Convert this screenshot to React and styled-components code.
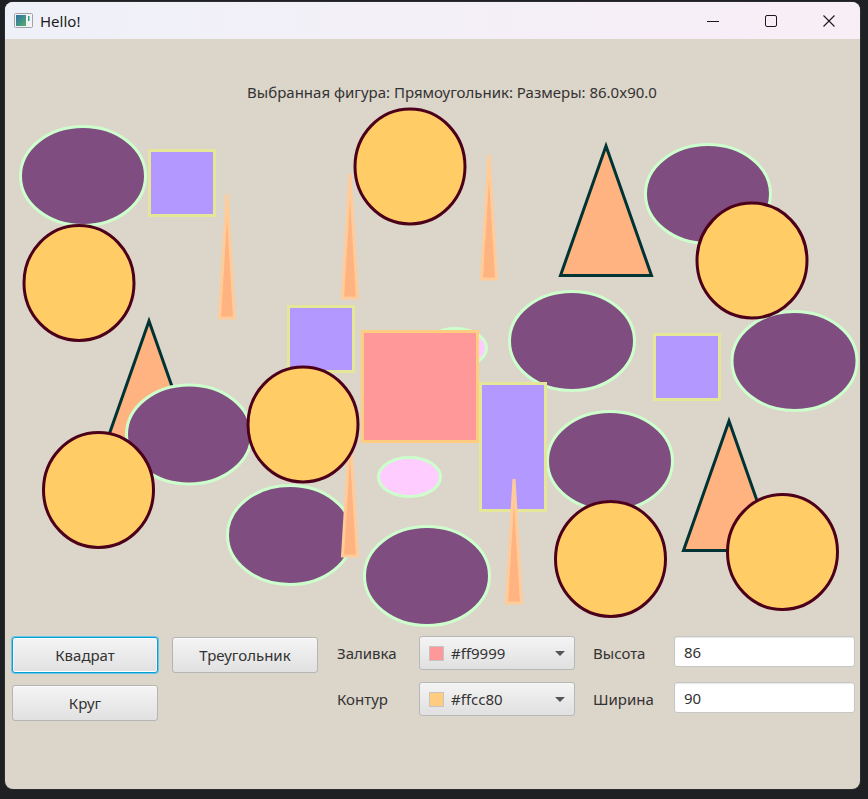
import styled, { createGlobalStyle } from "styled-components";

const GlobalStyle = createGlobalStyle`
  body {
    margin: 0;
    background: #1f2023;
    font-family: "Segoe UI", "Noto Sans", sans-serif;
  }
`;

const Page = styled.div`
  padding: 2px 0 0 5px;
  height: 799px;
  box-sizing: border-box;
`;

const Window = styled.div`
  width: 855px;
  height: 787px;
  border-radius: 8px;
  overflow: hidden;
  display: flex;
  flex-direction: column;
  background: #dcd5ca;
  box-shadow: 0 0 0 1px #2c2d30;
`;

const TitleBar = styled.div`
  height: 37px;
  flex: none;
  display: flex;
  align-items: center;
  background: linear-gradient(90deg, #eff1f8, #f8eef6);
`;

const AppIcon = styled.svg`
  margin-left: 9px;
  flex: none;
`;

const Title = styled.div`
  margin-left: 7px;
  font-size: 15px;
  color: #1b1b1b;
`;

const Captions = styled.div`
  margin-left: auto;
  margin-right: 2px;
  display: flex;
`;

const CaptionButton = styled.div`
  width: 58px;
  height: 37px;
  display: flex;
  align-items: center;
  justify-content: center;
`;

const Content = styled.div`
  flex: 1;
  display: flex;
  flex-direction: column;
`;

const Header = styled.div`
  margin-top: 44px;
  height: 18px;
  line-height: 18px;
  padding-left: 39px;
  text-align: center;
  font-size: 15px;
  color: #333;
`;

const Canvas = styled.svg`
  display: block;
  flex: none;
  overflow: visible;
`;

const Oval = styled.ellipse`
  fill: #7f4d7f;
  stroke: #ccffcc;
  stroke-width: 3;
`;

const Blob = styled.ellipse`
  fill: #ffccff;
  stroke: #ccffcc;
  stroke-width: 3;
`;

const Circle = styled.ellipse`
  fill: #ffcc66;
  stroke: #4d0019;
  stroke-width: 3;
`;

const Box = styled.rect`
  fill: ${(p) => (p.$pink ? "#ff9999" : "#b399ff")};
  stroke: ${(p) => (p.$pink ? "#ffcc80" : "#e6e699")};
  stroke-width: 3;
`;

const Spike = styled.polygon`
  fill: #ffb380;
  stroke: #ffcc99;
  stroke-width: 3;
`;

const Peak = styled.polygon`
  fill: #ffb380;
  stroke: #003333;
  stroke-width: 3;
`;

const Controls = styled.div`
  display: flex;
  padding: 6px 0 0 7px;
`;

const ButtonGrid = styled.div`
  display: grid;
  grid-template-columns: 146px 146px;
  column-gap: 14px;
  row-gap: 12px;
  margin-top: 1px;
  align-content: start;
`;

const Button = styled.button`
  height: 36px;
  box-sizing: border-box;
  border: 1px solid ${(p) => (p.$focused ? "#039ed3" : "#b4b4b4")};
  border-radius: 3px;
  background: linear-gradient(#f4f4f4, #e1e1e1);
  box-shadow: ${(p) =>
    p.$focused ? "0 0 0 1px #6cc6e8, inset 0 0 0 1px #ffffff" : "inset 0 1px 0 #fbfbfb"};
  font-family: "Segoe UI", "Noto Sans", sans-serif;
  font-size: 15px;
  color: #333;
  padding: 0;
`;

const FormGrid = styled.div`
  margin-left: 19px;
  display: grid;
  grid-template-columns: 82px 156px 99px 181px;
  grid-auto-rows: 34px;
  row-gap: 12px;
  align-items: center;
`;

const FieldLabel = styled.div`
  font-size: 15px;
  color: #333;
  padding-left: ${(p) => (p.$indent ? "18px" : "0")};
`;

const ColorCombo = styled.div`
  height: 34px;
  box-sizing: border-box;
  display: flex;
  align-items: center;
  gap: 7px;
  padding: 0 9px;
  border: 1px solid #b8b8b8;
  border-radius: 3px;
  background: linear-gradient(#f4f4f4, #e0e0e0);
  font-size: 15px;
  color: #333;
`;

const Swatch = styled.span`
  width: 15px;
  height: 15px;
  box-sizing: border-box;
  border: 1px solid #c9c2c2;
  background: ${(p) => p.$color};
`;

const Arrow = styled.span`
  margin-left: auto;
  width: 0;
  height: 0;
  border-left: 5px solid transparent;
  border-right: 5px solid transparent;
  border-top: 5px solid #555;
`;

const TextField = styled.input`
  align-self: start;
  height: 31px;
  box-sizing: border-box;
  width: 181px;
  border: 1px solid #c6c6c6;
  border-radius: 3px;
  background: #fff;
  box-shadow: inset 0 1px 1px #e8e8e8;
  padding: 0 9px;
  font-family: "Segoe UI", "Noto Sans", sans-serif;
  font-size: 15px;
  color: #333;
  outline: none;
`;

const ovals = [
  [83, 176], [708, 194], [572, 341], [794.5, 361],
  [189, 434.5], [610, 461], [290, 535], [427, 576],
];
const circles = [
  [410, 166.5], [752, 260.5], [79, 283], [303, 424.5],
  [98.5, 490], [610.5, 559], [782.5, 552],
];
const boxes = [
  [148, 149, 68, 68], [287, 305, 68, 68], [653, 333, 68, 68], [479, 382, 68, 130],
];
const spikes = [[227, 192], [350, 172], [489, 153], [350, 430], [514, 477]];
const peaks = [[606, 146], [149, 321], [729, 421]];

const spikePoints = ([x, y]) =>
  `${x},${y + 2} ${x - 7.5},${y + 126} ${x + 7.5},${y + 126}`;
const peakPoints = ([x, y]) =>
  `${x},${y} ${x - 45.5},${y + 129.5} ${x + 45.5},${y + 129.5}`;

export default function App() {
  return (
    <>
      <GlobalStyle />
      <Page>
        <Window>
          <TitleBar>
            <AppIcon width="19" height="15" viewBox="0 0 19 15">
              <defs>
                <linearGradient id="ic" x1="0" y1="0" x2="1" y2="1">
                  <stop offset="0" stopColor="#2f6fa8" />
                  <stop offset="1" stopColor="#56b06a" />
                </linearGradient>
              </defs>
              <rect x="0.5" y="0.5" width="18" height="14" rx="1" fill="#f3f3f5" stroke="#a2a2a8" />
              <rect x="2" y="2" width="10" height="11" fill="url(#ic)" />
              <rect x="14" y="3" width="1.5" height="5" fill="#2a9d8f" />
            </AppIcon>
            <Title>Hello!</Title>
            <Captions>
              <CaptionButton>
                <svg width="12" height="12" viewBox="0 0 12 12">
                  <path d="M0 6.5h12" stroke="#1a1a1a" strokeWidth="1" />
                </svg>
              </CaptionButton>
              <CaptionButton>
                <svg width="12" height="12" viewBox="0 0 12 12">
                  <rect x="0.5" y="0.5" width="11" height="11" rx="1.5" fill="none" stroke="#1a1a1a" />
                </svg>
              </CaptionButton>
              <CaptionButton>
                <svg width="12" height="12" viewBox="0 0 12 12">
                  <path d="M0.5 0.5l11 11M11.5 0.5l-11 11" stroke="#1a1a1a" strokeWidth="1.1" />
                </svg>
              </CaptionButton>
            </Captions>
          </TitleBar>
          <Content>
            <Header>Выбранная фигура: Прямоугольник: Размеры: 86.0x90.0</Header>
            <Canvas width="855" height="529" viewBox="5 101 855 529">
              {peaks.map((p, i) => (
                <Peak key={i} points={peakPoints(p)} />
              ))}
              {ovals.map(([x, y], i) => (
                <Oval key={i} cx={x} cy={y} rx="62.5" ry="49.5" />
              ))}
              {boxes.map(([x, y, w, h], i) => (
                <Box key={i} x={x + 1.5} y={y + 1.5} width={w - 3} height={h - 3} />
              ))}
              <Blob cx="455.5" cy="348" rx="31" ry="19.5" />
              <Blob cx="409.5" cy="477" rx="31" ry="19.5" />
              <Box $pink x="362.5" y="331.5" width="115" height="110" />
              {spikes.map((p, i) => (
                <Spike key={i} points={spikePoints(p)} />
              ))}
              {circles.map(([x, y], i) => (
                <Circle key={i} cx={x} cy={y} rx="55" ry="57.5" />
              ))}
            </Canvas>
            <Controls>
              <ButtonGrid>
                <Button $focused>Квадрат</Button>
                <Button>Треугольник</Button>
                <Button>Круг</Button>
              </ButtonGrid>
              <FormGrid>
                <FieldLabel>Заливка</FieldLabel>
                <ColorCombo>
                  <Swatch $color="#ff9999" />
                  #ff9999
                  <Arrow />
                </ColorCombo>
                <FieldLabel $indent>Высота</FieldLabel>
                <TextField defaultValue="86" />
                <FieldLabel>Контур</FieldLabel>
                <ColorCombo>
                  <Swatch $color="#ffcc80" />
                  #ffcc80
                  <Arrow />
                </ColorCombo>
                <FieldLabel $indent>Ширина</FieldLabel>
                <TextField defaultValue="90" />
              </FormGrid>
            </Controls>
          </Content>
        </Window>
      </Page>
    </>
  );
}
